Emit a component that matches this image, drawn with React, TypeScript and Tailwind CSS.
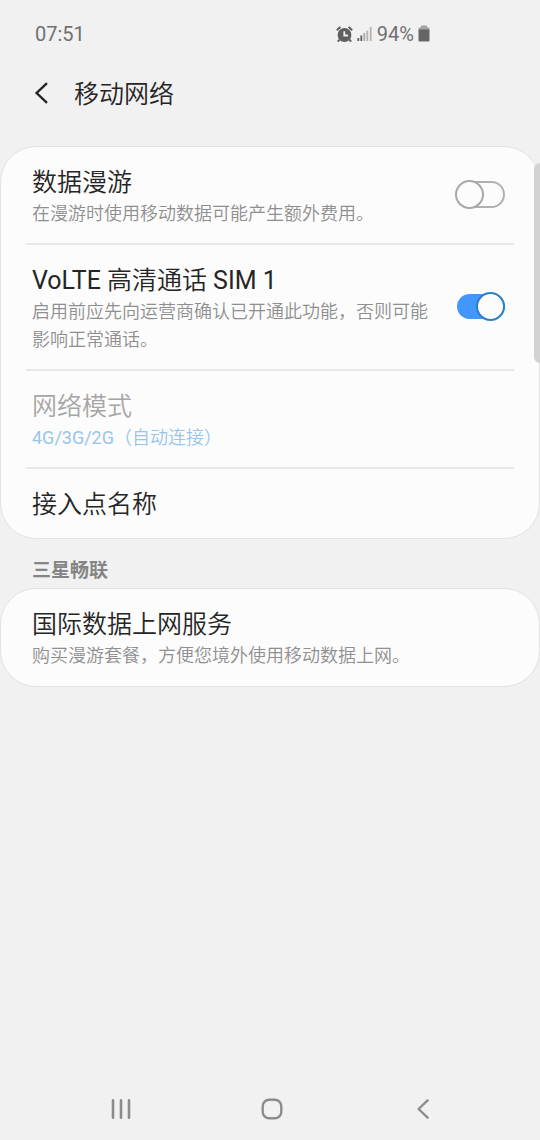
import { useState } from 'react';
import type { ReactNode } from 'react';

interface SwitchProps {
    id: string;
    checked: boolean;
    onChange: (checked: boolean) => void;
}

function Switch({ id, checked, onChange }: SwitchProps) {
    return (
        <span className="relative mb-1.5 flex h-[29px] w-[50px] shrink-0 items-center">
            <input
                id={id}
                type="checkbox"
                role="switch"
                checked={checked}
                onChange={e => onChange(e.target.checked)}
                className="peer absolute inset-0 z-10 h-full w-full cursor-pointer opacity-0"
            />
            <span className="ml-0.5 h-[27px] w-12 rounded-full border-2 border-[#b0b0b0] peer-checked:h-[25px] peer-checked:border-0 peer-checked:bg-[#4297ff]" />
            <span className="absolute left-0 top-0 h-[29px] w-[29px] rounded-full border-2 border-[#a8a8a8] bg-[#fcfcfc] peer-checked:left-auto peer-checked:right-0 peer-checked:border-[#2a7fcb]" />
        </span>
    );
}

function Card({ children }: { children: ReactNode }) {
    return (
        <div className="rounded-[36px] border border-[#e2e2e2] bg-[#fcfcfc] px-[25px]">
            {children}
        </div>
    );
}

const rowClass = 'flex w-full items-center gap-4 border-b-2 border-[#e8e8e8] pt-[19px] pb-[15px] pl-1.5 pr-[9px] text-left last:border-b-0 last:pb-4';
const titleClass = 'block text-[25px] leading-[34px] text-[#252525]';
const summaryClass = 'block text-[18px] leading-7 text-[#8f8f8f]';

export default function App() {
    const [roaming, setRoaming] = useState(false);
    const [volte, setVolte] = useState(true);

    return (
        <div
            lang="zh-CN"
            className="relative flex min-h-screen flex-col bg-[#f1f1f1] font-[Roboto,'Noto_Sans_CJK_SC',sans-serif] font-[350]"
        >
            <div className="flex h-[68px] items-center justify-between pl-[35px] pr-[110px] text-[20px] font-normal leading-6 text-[#707070]">
                <span>07:51</span>
                <div className="flex items-center gap-1">
                    <svg width="17" height="17" viewBox="0 0 17 17" fill="none" stroke="#5f5f5f">
                        <circle cx="8.5" cy="9" r="6.9" fill="#5f5f5f" stroke="none" />
                        <path d="M0.8 4.2L4.4 1M16.2 4.2L12.6 1" strokeWidth="2" />
                        <path d="M3.6 13.6L1.8 15.6M13.4 13.6L15.2 15.6" strokeWidth="2" />
                        <path d="M8.3 5.2V9.5H12" stroke="#f1f1f1" strokeWidth="1.8" />
                    </svg>
                    <svg width="16" height="15" viewBox="0 0 16 15">
                        <rect x="0.4" y="11" width="1.8" height="3" fill="#5f5f5f" />
                        <rect x="3.4" y="8.5" width="1.8" height="5.5" fill="#5f5f5f" />
                        <rect x="6.4" y="6" width="1.8" height="8" fill="#a9a9a9" />
                        <rect x="9.4" y="3.5" width="1.8" height="10.5" fill="#b3b3b3" />
                        <rect x="12.8" y="0" width="1.8" height="14" fill="#b3b3b3" />
                    </svg>
                    <span>94%</span>
                    <svg width="12" height="18" viewBox="0 0 12 18">
                        <rect x="3" y="0.5" width="6" height="3" fill="#a3a3a3" />
                        <rect x="0.5" y="2.5" width="11" height="3" rx="1" fill="#a3a3a3" />
                        <path d="M0.5 4.5H11.5V15.5Q11.5 16.5 10.5 16.5H1.5Q0.5 16.5 0.5 15.5Z" fill="#666" />
                    </svg>
                </div>
            </div>

            <header className="flex h-[50px] items-center gap-6 pl-[34px]">
                <button type="button" aria-label="返回">
                    <svg width="16" height="22" viewBox="0 0 16 22" fill="none" stroke="#252525" strokeWidth="2.4">
                        <path d="M13 1.2L2.6 11L13 20.8" />
                    </svg>
                </button>
                <h1 className="pt-1 text-[25px] leading-9 text-[#252525]">移动网络</h1>
            </header>

            <main className="flex-1 pt-7">
                <Card>
                    <div className={rowClass}>
                        <label htmlFor="roaming" className="flex-1">
                            <span className={titleClass}>数据漫游</span>
                            <span className={summaryClass}>在漫游时使用移动数据可能产生额外费用。</span>
                        </label>
                        <Switch id="roaming" checked={roaming} onChange={setRoaming} />
                    </div>
                    <div className={rowClass}>
                        <label htmlFor="volte" className="flex-1">
                            <span className={titleClass}>
                                <span className="font-normal">VoLTE</span> 高清通话 <span className="font-normal">SIM 1</span>
                            </span>
                            <span className={summaryClass}>启用前应先向运营商确认已开通此功能，否则可能影响正常通话。</span>
                        </label>
                        <Switch id="volte" checked={volte} onChange={setVolte} />
                    </div>
                    <button type="button" disabled className={rowClass}>
                        <span>
                            <span className="block text-[25px] leading-[34px] text-[#a6a6a6]">网络模式</span>
                            <span className="block text-[18px] leading-7 text-[#98c5ea]">
                                <span className="font-normal">4G/3G/2G</span>（自动连接）
                            </span>
                        </span>
                    </button>
                    <button type="button" className={rowClass}>
                        <span className={titleClass}>接入点名称</span>
                    </button>
                </Card>

                <h2 className="px-8 pt-[18px] pb-[3px] text-[19px] font-bold leading-7 text-[#858585]">三星畅联</h2>

                <Card>
                    <button type="button" className={rowClass}>
                        <span>
                            <span className={titleClass}>国际数据上网服务</span>
                            <span className={summaryClass}>购买漫游套餐，方便您境外使用移动数据上网。</span>
                        </span>
                    </button>
                </Card>
            </main>

            {/* scroll indicator */}
            <div className="absolute right-0 top-[163px] h-[200px] w-1.5 rounded-l-full bg-[#d2d2d2]" />

            <nav className="grid h-[62px] grid-cols-3 items-center pl-[45px] pr-[42px]">
                <button type="button" aria-label="最近任务" className="flex justify-center">
                    <svg width="20" height="20" viewBox="0 0 20 20" stroke="#8c8c8c" strokeWidth="2.6" strokeLinecap="round">
                        <path d="M2 1.3V18.7M10 1.3V18.7M18 1.3V18.7" />
                    </svg>
                </button>
                <button type="button" aria-label="主屏幕" className="flex justify-center">
                    <svg width="22" height="22" viewBox="0 0 22 22" fill="none" stroke="#8c8c8c" strokeWidth="2.4">
                        <rect x="1.7" y="1.7" width="18.6" height="18.6" rx="6.5" />
                    </svg>
                </button>
                <button type="button" aria-label="返回上一页" className="flex justify-center">
                    <svg width="12" height="20" viewBox="0 0 12 20" fill="none" stroke="#8c8c8c" strokeWidth="2.4" strokeLinecap="round" strokeLinejoin="round">
                        <path d="M10.6 1.4L1.6 10L10.6 18.6" />
                    </svg>
                </button>
            </nav>
        </div>
    );
}
